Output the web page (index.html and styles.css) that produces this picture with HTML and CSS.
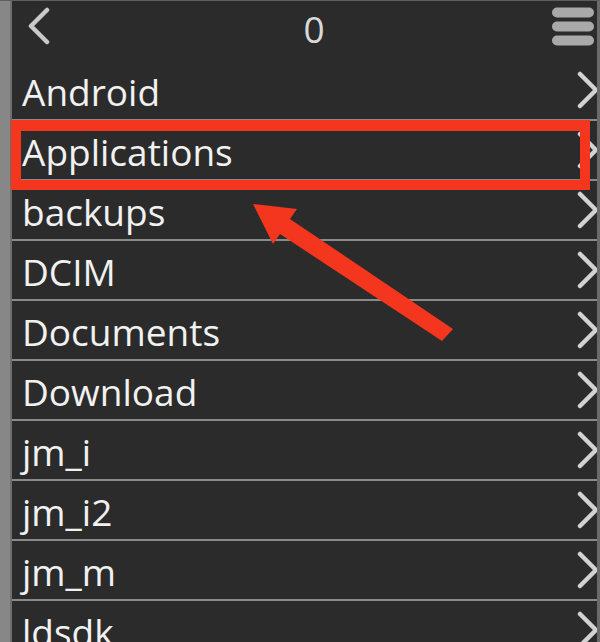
FILE: index.html
```html
<!DOCTYPE html>
<html>
<head>
<meta charset="utf-8">
<link rel="stylesheet" href="styles.css">
</head>
<body>
<div class="screen">
  <div class="edge-left"></div>
  <div class="main">
    <div class="header">
      <svg class="back" width="24" height="38" viewBox="0 0 24 38"><polyline points="20,3 4,19 20,35" fill="none" stroke="#c9c9c9" stroke-width="4.5" stroke-linecap="round" stroke-linejoin="round"/></svg>
      <div class="title">0</div>
      <svg class="menu" width="44" height="39" viewBox="0 0 44 39">
        <rect x="1" y="0.5" width="42" height="10" rx="5" fill="#a9a9a9"/>
        <rect x="1" y="14.5" width="42" height="10" rx="5" fill="#a9a9a9"/>
        <rect x="1" y="28.5" width="42" height="10" rx="5" fill="#a9a9a9"/>
      </svg>
    </div>
    <ul class="list">
      <li class="row"><span class="name">Android</span><svg class="chev" width="22" height="38" viewBox="0 0 22 38"><polyline points="3,3 19,19 3,35" fill="none" stroke="#d2d2d2" stroke-width="4.5" stroke-linecap="round" stroke-linejoin="round"/></svg></li>
      <li class="row"><span class="name">Applications</span><svg class="chev" width="22" height="38" viewBox="0 0 22 38"><polyline points="3,3 19,19 3,35" fill="none" stroke="#d2d2d2" stroke-width="4.5" stroke-linecap="round" stroke-linejoin="round"/></svg></li>
      <li class="row"><span class="name">backups</span><svg class="chev" width="22" height="38" viewBox="0 0 22 38"><polyline points="3,3 19,19 3,35" fill="none" stroke="#d2d2d2" stroke-width="4.5" stroke-linecap="round" stroke-linejoin="round"/></svg></li>
      <li class="row"><span class="name">DCIM</span><svg class="chev" width="22" height="38" viewBox="0 0 22 38"><polyline points="3,3 19,19 3,35" fill="none" stroke="#d2d2d2" stroke-width="4.5" stroke-linecap="round" stroke-linejoin="round"/></svg></li>
      <li class="row"><span class="name">Documents</span><svg class="chev" width="22" height="38" viewBox="0 0 22 38"><polyline points="3,3 19,19 3,35" fill="none" stroke="#d2d2d2" stroke-width="4.5" stroke-linecap="round" stroke-linejoin="round"/></svg></li>
      <li class="row"><span class="name">Download</span><svg class="chev" width="22" height="38" viewBox="0 0 22 38"><polyline points="3,3 19,19 3,35" fill="none" stroke="#d2d2d2" stroke-width="4.5" stroke-linecap="round" stroke-linejoin="round"/></svg></li>
      <li class="row"><span class="name">jm_i</span><svg class="chev" width="22" height="38" viewBox="0 0 22 38"><polyline points="3,3 19,19 3,35" fill="none" stroke="#d2d2d2" stroke-width="4.5" stroke-linecap="round" stroke-linejoin="round"/></svg></li>
      <li class="row"><span class="name">jm_i2</span><svg class="chev" width="22" height="38" viewBox="0 0 22 38"><polyline points="3,3 19,19 3,35" fill="none" stroke="#d2d2d2" stroke-width="4.5" stroke-linecap="round" stroke-linejoin="round"/></svg></li>
      <li class="row"><span class="name">jm_m</span><svg class="chev" width="22" height="38" viewBox="0 0 22 38"><polyline points="3,3 19,19 3,35" fill="none" stroke="#d2d2d2" stroke-width="4.5" stroke-linecap="round" stroke-linejoin="round"/></svg></li>
      <li class="row"><span class="name">ldsdk</span><svg class="chev" width="22" height="38" viewBox="0 0 22 38"><polyline points="3,3 19,19 3,35" fill="none" stroke="#d2d2d2" stroke-width="4.5" stroke-linecap="round" stroke-linejoin="round"/></svg></li>
    </ul>
  </div>
  <div class="edge-right"></div>
  <div class="highlight"></div>
  <svg class="arrow" width="600" height="642" viewBox="0 0 600 642"><polygon points="253,203 297,208 290,218 453,328 442,340 280,233 273,243" fill="#f3361d"/></svg>
</div>
</body>
</html>
```

FILE: styles.css
```css
html, body {
  margin: 0;
  padding: 0;
  background: #2b2b2b;
}
.screen {
  position: relative;
  width: 600px;
  height: 642px;
  overflow: hidden;
  display: flex;
  background: #2b2b2b;
  border-top: 1px solid #5e5e5e;
  box-sizing: border-box;
  font-family: "Open Sans", "DejaVu Sans", sans-serif;
}
.edge-left {
  width: 10px;
  flex: none;
  background: #878787;
  border-right: 2px solid #6f6f6f;
}
.edge-right {
  width: 3px;
  flex: none;
  background: #6a6a6a;
}
.main {
  flex: 1;
  display: flex;
  flex-direction: column;
  min-width: 0;
}
.header {
  height: 60px;
  flex: none;
  display: flex;
  align-items: center;
  padding-left: 15px;
  padding-right: 2px;
}
.back {
  display: block;
  margin-bottom: 10px;
}
.title {
  flex: 1;
  text-align: center;
  padding-left: 26px;
  font-size: 37px;
  line-height: 1;
  color: #d9d9d9;
  margin-bottom: 6px;
}
.menu {
  display: block;
  margin-bottom: 10px;
}
.list {
  list-style: none;
  margin: 0;
  padding: 0;
}
.row {
  height: 58px;
  border-bottom: 2px solid #8a8a8a;
  display: flex;
  align-items: center;
  justify-content: space-between;
  padding-left: 10px;
}
.name {
  font-size: 37px;
  line-height: 58px;
  padding-top: 3px;
  color: #f1f1f1;
  white-space: nowrap;
}
.chev {
  display: block;
  flex: none;
  margin-right: -2px;
}
.highlight {
  position: absolute;
  left: 11px;
  top: 119px;
  width: 579px;
  height: 70px;
  box-sizing: border-box;
  border: 10px solid #f3361d;
  border-top-width: 11px;
}
.arrow {
  position: absolute;
  left: 0;
  top: 0;
}
```
